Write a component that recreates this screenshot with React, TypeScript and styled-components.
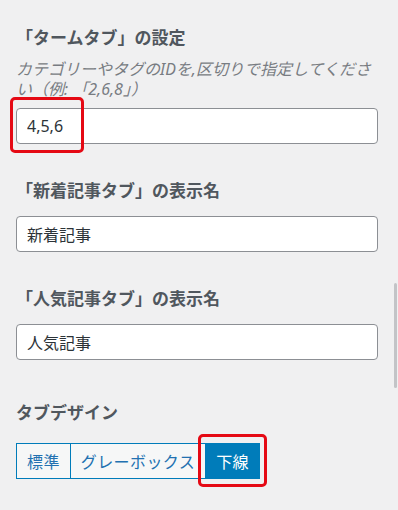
import React from "react";
import styled, { createGlobalStyle } from "styled-components";

const GlobalStyle = createGlobalStyle`
  html, body {
    margin: 0;
    padding: 0;
    background: #f0f0f1;
  }
  body {
    font-family: "Noto Sans", "Noto Sans CJK JP", sans-serif;
    color: #2c3338;
  }
`;

const tabs = ["標準", "グレーボックス", "下線"];

const App = () => {
  return (
    <>
      <GlobalStyle />
      <S.Panel>
        <S.Section>
          <S.Title>「タームタブ」の設定</S.Title>
          <S.Desc>カテゴリーやタグのIDを,区切りで指定してください（例: 「2,6,8」）</S.Desc>
          <S.FieldWrap>
            <S.Input defaultValue="4,5,6" />
            <S.Highlight $left={-6} $top={-11} $width={74} $height={56} />
          </S.FieldWrap>
        </S.Section>

        <S.Section>
          <S.Title>「新着記事タブ」の表示名</S.Title>
          <S.Input defaultValue="新着記事" />
        </S.Section>

        <S.Section>
          <S.Title>「人気記事タブ」の表示名</S.Title>
          <S.Input defaultValue="人気記事" />
        </S.Section>

        <S.Section $design>
          <S.Title $design>タブデザイン</S.Title>
          <S.Group>
            {tabs.map((t, i) => (
              <S.TabButton key={t} $active={i === 2}>
                {t}
                {i === 2 && <S.Highlight $left={-8} $top={-10} $width={69} $height={53} />}
              </S.TabButton>
            ))}
          </S.Group>
        </S.Section>

        <S.ScrollThumb />
      </S.Panel>
    </>
  );
};

export default App;

const S = {
  Panel: styled.div`
    position: relative;
    width: 398px;
    height: 510px;
    box-sizing: border-box;
    padding: 25px 20px 0 16px;
    overflow: hidden;
  `,
  Section: styled.section<{ $design?: boolean }>`
    margin-bottom: ${(p) => (p.$design ? "0" : "34px")};
    margin-top: ${(p) => (p.$design ? "40px" : "0")};
  `,
  Title: styled.h3<{ $design?: boolean }>`
    margin: 0 0 ${(p) => (p.$design ? "19px" : "14px")};
    font-size: 17px;
    line-height: 24px;
    font-weight: 700;
    color: #50575e;
    font-family: "Noto Sans CJK JP", sans-serif;
  `,
  Desc: styled.p`
    margin: -4px 0 9px;
    font-size: 16px;
    line-height: 20px;
    font-style: italic;
    color: #787c82;
    font-family: "Noto Sans", "Noto Sans CJK JP", sans-serif;
  `,
  FieldWrap: styled.div`
    position: relative;
  `,
  Input: styled.input`
    display: block;
    width: 100%;
    box-sizing: border-box;
    height: 36px;
    padding: 0 10px;
    border: 1px solid #8c8f94;
    border-radius: 4px;
    background: #fff;
    font-size: 16px;
    color: #2c3338;
    font-family: "Noto Sans", "Noto Sans CJK JP", sans-serif;
    outline: none;
  `,
  Highlight: styled.span<{ $left: number; $top: number; $width: number; $height: number }>`
    position: absolute;
    left: ${(p) => p.$left}px;
    top: ${(p) => p.$top}px;
    width: ${(p) => p.$width}px;
    height: ${(p) => p.$height}px;
    box-sizing: border-box;
    border: 3px solid #e50914;
    border-radius: 5px;
    pointer-events: none;
  `,
  Group: styled.div`
    display: flex;
  `,
  TabButton: styled.button<{ $active?: boolean }>`
    position: relative;
    height: 36px;
    padding: 0 10px;
    margin-left: -1px;
    border: 1px solid #007cba;
    border-radius: 0;
    background: ${(p) => (p.$active ? "#007cba" : "#f6f7f7")};
    color: ${(p) => (p.$active ? "#fff" : "#2271b1")};
    font-size: 16px;
    letter-spacing: 0.4px;
    font-family: "Noto Sans CJK JP", sans-serif;
    cursor: pointer;
    &:first-child {
      margin-left: 0;
    }
  `,
  ScrollThumb: styled.div`
    position: absolute;
    right: 1px;
    top: 283px;
    width: 3px;
    height: 105px;
    border-radius: 2px;
    background: #c3c4c7;
  `,
};
